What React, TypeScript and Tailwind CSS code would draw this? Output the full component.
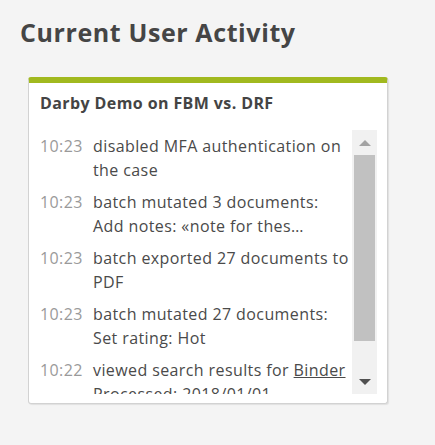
interface Activity {
    time: string;
    text: React.ReactNode;
}

const activities: Activity[] = [
    { time: '10:23', text: 'disabled MFA authentication on the case' },
    { time: '10:23', text: 'batch mutated 3 documents: Add notes: «note for thes…' },
    { time: '10:23', text: 'batch exported 27 documents to PDF' },
    { time: '10:23', text: 'batch mutated 27 documents: Set rating: Hot' },
    {
        time: '10:22',
        text: (
            <>
                viewed search results for <span className="underline">Binder Processed: 2018/01/01</span>
            </>
        ),
    },
];

// fake scrollbar, looks like the native one in the screenshot
function ScrollBar() {
    return (
        <div className="w-[25px] shrink-0 bg-[#f1f1f1] flex flex-col items-center">
            <div className="h-[25px] flex items-center justify-center">
                <div className="w-0 h-0 border-l-[6px] border-r-[6px] border-b-[6px] border-l-transparent border-r-transparent border-b-[#a3a3a3]" />
            </div>
            <div className="w-[21px] h-[186px] bg-[#c1c1c1]" />
            <div className="flex-1" />
            <div className="h-[25px] flex items-center justify-center">
                <div className="w-0 h-0 border-l-[6px] border-r-[6px] border-t-[6px] border-l-transparent border-r-transparent border-t-[#505050]" />
            </div>
        </div>
    );
}

export default function App() {
    return (
        <div className="w-[435px] h-[445px] bg-[#f4f4f4] font-['Open_Sans',sans-serif] pt-[14px] pl-5">
            <h1 className="text-[25px] leading-[36px] font-bold tracking-[0.6px] text-[#454545]">Current User Activity</h1>

            <div className="mt-[27px] ml-2 w-[360px] bg-white border border-[#d2d2d2] border-t-[6px] border-t-[#a1b91f] rounded-[3px] shadow-[1px_1px_1px_rgba(0,0,0,0.08)] pt-[10px] pl-[11px] pr-[10px] pb-[9px]">
                <h2 className="text-[16px] leading-[20px] font-bold tracking-[0.4px] text-[#444]">Darby Demo on FBM vs. DRF</h2>

                <div className="mt-[17px] flex h-[264px]">
                    <ul className="flex-1 overflow-hidden text-[16px] leading-[24px] tracking-[0.4px]">
                        {activities.map((a, i) => (
                            <li key={i} className="flex py-1">
                                <span className="w-[53px] shrink-0 text-[#9a9a9a]">{a.time}</span>
                                <span className="text-[#4a4a4a]">{a.text}</span>
                            </li>
                        ))}
                    </ul>
                    <ScrollBar />
                </div>
            </div>
        </div>
    );
}
